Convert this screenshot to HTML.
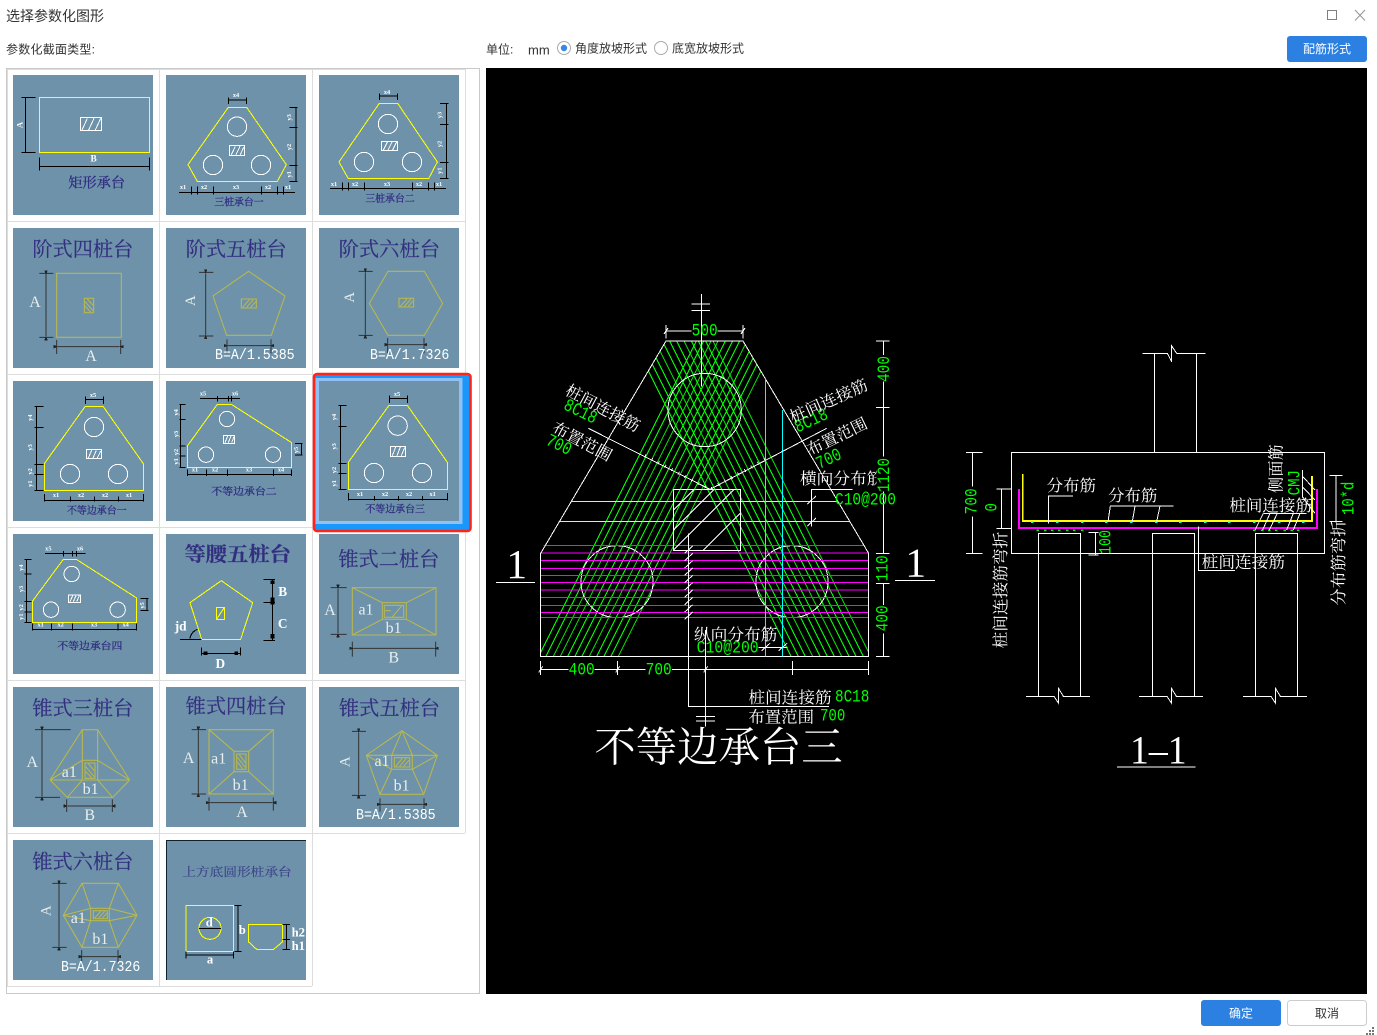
<!DOCTYPE html>
<html lang="zh"><head><meta charset="utf-8"><title>选择参数化图形</title>
<style>
html,body{margin:0;padding:0;background:#fff;width:1377px;height:1035px;overflow:hidden}
svg{display:block;position:absolute;left:0;top:0;shape-rendering:crispEdges}
circle.aa,rect.aa,path.aa{shape-rendering:geometricPrecision}
text{dominant-baseline:central}
.ui{font:12px "Liberation Sans","Noto Sans CJK SC",sans-serif;fill:#333}
.bg{fill:#6d92a9}
.y{fill:none;stroke:#ff0;stroke-width:3.2}
.o{fill:none;stroke:#b8b850;stroke-width:3.2;shape-rendering:geometricPrecision}
.b{fill:none;stroke:#000;stroke-width:3.2}
.d{fill:none;stroke:#333;stroke-width:3;shape-rendering:geometricPrecision}
.w{fill:none;stroke:#fff;stroke-width:3}
.s{font:bold 19px "Liberation Serif",serif;fill:#fff;text-anchor:middle}
.h{font-family:"Noto Serif CJK SC",serif;font-size:60px;fill:#332f80;stroke:#332f80;stroke-width:.6}
.h2{font-family:"Noto Serif CJK SC",serif;font-size:30px;fill:#2f2b80;stroke:#2f2b80;stroke-width:.8}
.L{font-family:"Liberation Serif",serif;font-size:48px;fill:#e8eeee;text-anchor:middle}
.K{font-family:"Liberation Mono",monospace;font-size:44px;fill:#fff}
.B{font:bold 36px "Liberation Serif",serif;fill:#fff;text-anchor:middle}
.g{font-family:"Liberation Mono",monospace;font-size:54px;fill:#0f0}
.a{font-family:"Noto Serif CJK SC",serif;font-size:48px;fill:#fff}
.gm{text-anchor:middle}
.n{fill:none;stroke:#fff;stroke-width:3}
</style></head><body>
<svg width="1377" height="1035" viewBox="0 0 1377 1035" xmlns="http://www.w3.org/2000/svg">
<defs>
<marker id="ar" viewBox="0 0 14 10" refX="1" refY="5" markerWidth="14" markerHeight="10" markerUnits="userSpaceOnUse" orient="auto-start-reverse"><path d="M0 5L14 0V10Z" fill="#222"/></marker>
<clipPath id="out"><path d="M528 153H759L1136 790V1099H152V790Z"/></clipPath>
<clipPath id="ctr"><rect x="551" y="598" width="200" height="183"/></clipPath>
</defs>

<!-- header -->
<text class="ui" x="6" y="16" style="font-size:14px" textLength="98">选择参数化图形</text>
<text class="ui" x="6" y="49.5" textLength="89">参数化截面类型:</text>
<text class="ui" x="486" y="49.5">单位:</text>
<text class="ui" x="528" y="50" style="font-size:13px">mm</text>
<circle class="aa" cx="564" cy="48" r="6.5" fill="#fff" stroke="#aaa"/><circle class="aa" cx="564" cy="48" r="3.2" fill="#3a86e8"/>
<text class="ui" x="575" y="48.5" textLength="72" fill="#222">角度放坡形式</text>
<circle class="aa" cx="661" cy="48" r="6.5" fill="#fff" stroke="#aaa"/>
<text class="ui" x="672" y="48.5" textLength="72">底宽放坡形式</text>
<rect x="1327.5" y="10.5" width="9" height="9" fill="none" stroke="#808080" stroke-width="1.1"/>
<path class="aa" d="M1355 10L1365 20.5M1365 10L1355 20.5" stroke="#999" stroke-width="1.1" fill="none"/>
<rect class="aa" x="1287" y="36" width="80" height="26" rx="3" fill="#2b80e2"/>
<text class="ui" x="1327" y="49" text-anchor="middle" style="fill:#fff">配筋形式</text>

<!-- footer -->
<rect class="aa" x="1201" y="1000" width="80" height="26" rx="3" fill="#2b80e2"/>
<text class="ui" x="1241" y="1013.5" text-anchor="middle" style="fill:#fff">确定</text>
<rect class="aa" x="1287.5" y="1000.5" width="79" height="25" rx="3" fill="#fff" stroke="#ccc"/>
<text class="ui" x="1327" y="1013.5" text-anchor="middle">取消</text>
<path d="M1372 1027h2v2h-2zM1369 1030h2v2h-2zM1372 1030h2v2h-2zM1366 1033h2v2h-2zM1369 1033h2v2h-2zM1372 1033h2v2h-2z" fill="#777"/>

<!-- list panel -->
<rect x="6.5" y="68.5" width="473" height="925" fill="#fff" stroke="#c9c9c9" stroke-width="1.2"/>
<path d="M7.5 69V986M159.5 69V986M312.5 69V986M465.5 69V833M7 69.5H465M7 221.5H465M7 374.5H465M7 527.5H465M7 680.5H465M7 833.5H465M7 986.5H312" stroke="#ddd" fill="none"/>

<!-- selection -->
<rect class="aa" x="314" y="374" width="156.5" height="157" rx="3" fill="#1a97fb" stroke="#ff2318" stroke-width="2.6"/>
<rect x="315.5" y="378" width="147" height="146" fill="#8fc0f6"/>

<!-- thumbs backgrounds -->
<rect class="bg" x="13" y="75" width="140" height="140"/><rect class="bg" x="166" y="75" width="140" height="140"/><rect class="bg" x="319" y="75" width="140" height="140"/>
<rect class="bg" x="13" y="228" width="140" height="140"/><rect class="bg" x="166" y="228" width="140" height="140"/><rect class="bg" x="319" y="228" width="140" height="140"/>
<rect class="bg" x="13" y="381" width="140" height="140"/><rect class="bg" x="166" y="381" width="140" height="140"/><rect class="bg" x="319" y="381" width="140" height="140"/>
<rect class="bg" x="13" y="534" width="140" height="140"/><rect class="bg" x="166" y="534" width="140" height="140"/><rect class="bg" x="319" y="534" width="140" height="140"/>
<rect class="bg" x="13" y="687" width="140" height="140"/><rect class="bg" x="166" y="687" width="140" height="140"/><rect class="bg" x="319" y="687" width="140" height="140"/>
<rect class="bg" x="13" y="840" width="140" height="140"/><rect class="bg" x="166" y="840" width="140" height="140"/>
<path d="M166 840.5H306M166.5 840V980" stroke="#10222e" fill="none"/>

<!-- ROW 1 & 2 -->
<g transform="scale(.33333)">
 <!-- rect -->
 <rect class="y" x="118" y="292" width="331" height="166"/>
 <rect class="w" x="241" y="353" width="64" height="39"/>
 <path class="w" d="M246 390L262 355M266 390L282 355M286 390L302 355"/>
 <path class="b" d="M64 292H107M64 458H107M77 292V458M118 472V512M449 472V512M118 499H449"/>
 <text class="s" style="font-size:26px" transform="rotate(-90 58 375)" x="58" y="375">A</text>
 <text class="s" style="font-size:28px" x="281" y="478">B</text>
 <text class="h2" style="font-size:42px" x="205" y="548" textLength="170" lengthAdjust="spacingAndGlyphs">矩形承台</text>
 <!-- 三桩一 -->
 <path class="y" d="M685 322H740L859 494L832 544H592L564 494Z"/>
 <circle class="w" cx="711" cy="380" r="29"/><circle class="w" cx="639" cy="495" r="29"/><circle class="w" cx="783" cy="495" r="29"/>
 <rect class="w" x="688" y="437" width="46" height="29"/><path class="w" d="M694 464L706 439M708 464L720 439M721 464L731 442"/>
 <path class="b" d="M686 300H740M686 293V312M740 293V312M888 322V544M868 322H893M868 383H893M868 496H893M868 544H893M537 578H885M575 560V584M592 560V584M640 560V584M785 560V584M832 560V584M850 560V584"/>
 <text class="s" x="708" y="287">x4</text>
 <text class="s" transform="rotate(-90 868 352)" x="868" y="352">y3</text><text class="s" transform="rotate(-90 868 441)" x="868" y="441">y2</text><text class="s" transform="rotate(-90 868 523)" x="868" y="523">y1</text>
 <text class="s" x="549" y="563">x1</text><text class="s" x="612" y="563">x2</text><text class="s" x="708" y="563">x3</text><text class="s" x="804" y="563">x2</text><text class="s" x="864" y="563">x1</text>
 <text class="h2" x="643" y="605" textLength="148" lengthAdjust="spacingAndGlyphs">三桩承台一</text>
 <!-- 三桩二 -->
 <path class="y" d="M1138 310H1193L1312 486L1286 536H1045L1017 486Z"/>
 <circle class="w" cx="1164" cy="372" r="29"/><circle class="w" cx="1092" cy="486" r="29"/><circle class="w" cx="1236" cy="486" r="29"/>
 <rect class="w" x="1144" y="424" width="49" height="28"/><path class="w" d="M1150 450L1162 426M1164 450L1176 426M1178 450L1190 426"/>
 <path class="b" d="M1138 288H1192M1138 281V300M1192 281V300M1340 310V536M1320 310H1345M1320 373H1345M1320 487H1345M1320 536H1345M990 566H1338M1027 548V572M1045 548V572M1093 548V572M1238 548V572M1286 548V572M1304 548V572"/>
 <text class="s" x="1161" y="278">x4</text>
 <text class="s" transform="rotate(-90 1320 345)" x="1320" y="345">y3</text><text class="s" transform="rotate(-90 1320 432)" x="1320" y="432">y2</text><text class="s" transform="rotate(-90 1320 512)" x="1320" y="512">y1</text>
 <text class="s" x="1002" y="554">x1</text><text class="s" x="1065" y="554">x2</text><text class="s" x="1161" y="554">x3</text><text class="s" x="1257" y="554">x2</text><text class="s" x="1317" y="554">x1</text>
 <text class="h2" x="1096" y="594" textLength="148" lengthAdjust="spacingAndGlyphs">三桩承台二</text>

 <!-- 阶式四 -->
 <text class="h" x="97" y="743" textLength="303" lengthAdjust="spacingAndGlyphs">阶式四桩台</text>
 <path class="o" d="M170 820H364V1012H170Z"/>
 <path class="o" d="M253 895H281V938H253Z"/><path class="o" stroke-width="2" d="M255 905L279 932M255 918L272 936M262 897L279 916"/>
 <path class="d" d="M118 820H160M118 1012H160" stroke="#444"/>
 <path class="d" marker-start="url(#ar)" marker-end="url(#ar)" d="M138 824V1008"/>
 <path class="d" d="M170 1020V1062M362 1020V1062"/>
 <path class="d" marker-start="url(#ar)" marker-end="url(#ar)" d="M174 1040H358"/>
 <text class="L" x="105" y="908">A</text><text class="L" x="273" y="1070">A</text>
 <!-- 阶式五 -->
 <text class="h" x="557" y="743" textLength="303" lengthAdjust="spacingAndGlyphs">阶式五桩台</text>
 <path class="o" d="M746 814L855 888L814 1006H680L639 888Z"/>
 <path class="o" d="M724 897H769V924H724Z"/><path class="o" stroke-width="2" d="M728 922L748 899M740 922L760 899M752 922L767 905"/>
 <path class="d" d="M597 817H640M597 1008H640"/>
 <path class="d" marker-start="url(#ar)" marker-end="url(#ar)" d="M617 821V1004"/>
 <path class="d" d="M681 1018V1060M813 1018V1060"/>
 <path class="d" marker-start="url(#ar)" marker-end="url(#ar)" d="M685 1037H809"/>
 <text class="L" style="font-size:44px" transform="rotate(-90 573 902)" x="573" y="902">A</text>
 <text class="K" x="645" y="1068" textLength="239" lengthAdjust="spacingAndGlyphs">B=A/1.5385</text>
 <!-- 阶式六 -->
 <text class="h" x="1016" y="743" textLength="304" lengthAdjust="spacingAndGlyphs">阶式六桩台</text>
 <path class="o" d="M1164 814H1273L1328 910L1273 1006H1164L1108 910Z"/>
 <path class="o" d="M1197 895H1241V921H1197Z"/><path class="o" stroke-width="2" d="M1201 919L1221 897M1213 919L1233 897M1225 919L1239 903"/>
 <path class="d" d="M1076 814H1118M1076 1006H1118"/>
 <path class="d" marker-start="url(#ar)" marker-end="url(#ar)" d="M1096 818V1002"/>
 <path class="d" d="M1163 1014V1060M1272 1014V1060"/>
 <path class="d" marker-start="url(#ar)" marker-end="url(#ar)" d="M1167 1034H1268"/>
 <text class="L" style="font-size:44px" transform="rotate(-90 1050 892)" x="1050" y="892">A</text>
 <text class="K" x="1110" y="1068" textLength="238" lengthAdjust="spacingAndGlyphs">B=A/1.7326</text>
</g>

<!-- ROW 3 & 4 -->
<g transform="translate(0,370) scale(.33333)">
 <!-- 不等边一 -->
 <path class="y" d="M255 110H310L430 281V361H133V281Z"/>
 <circle class="w" cx="282" cy="171" r="29"/><circle class="w" cx="210" cy="312" r="29"/><circle class="w" cx="354" cy="312" r="29"/>
 <rect class="w" x="259" y="239" width="46" height="27"/><path class="w" d="M265 264L275 241M279 264L289 241M292 264L302 243"/>
 <path class="b" d="M256 88H310M256 80V102M310 80V102M110 110V361M103 110H130M103 172H130M103 284H130M103 314H130M103 361H130M133 391H430M133 372V395M212 380V395M284 380V395M355 380V395M430 372V395"/>
 <text class="s" x="279" y="77">x5</text>
 <text class="s" transform="rotate(-90 91 143)" x="91" y="143">y4</text><text class="s" transform="rotate(-90 91 232)" x="91" y="232">y3</text><text class="s" transform="rotate(-90 91 304)" x="91" y="304">y2</text><text class="s" transform="rotate(-90 91 341)" x="91" y="341">y1</text>
 <text class="s" x="168" y="377">x1</text><text class="s" x="243" y="377">x2</text><text class="s" x="315" y="377">x2</text><text class="s" x="387" y="377">x1</text>
 <text class="h2" x="201" y="420" textLength="179" lengthAdjust="spacingAndGlyphs">不等边承台一</text>
 <!-- 不等边二 -->
 <path class="y" d="M652 103H694L875 218V292H562V228Z"/>
 <circle class="w" cx="681" cy="147" r="23"/><circle class="w" cx="618" cy="254" r="23"/><circle class="w" cx="819" cy="254" r="23"/>
 <rect class="w" x="670" y="196" width="34" height="24"/><path class="w" d="M675 218L683 198M685 218L693 198M695 218L702 200"/>
 <path class="b" d="M600 85H720M652 78V95M685 78V95M694 78V95M541 103V292M538 103H557M538 148H557M538 228H557M538 258H557M538 292H557M885 220H908M885 255H908M905 220V255M562 313H875M562 298V318M619 298V318M682 298V318M820 298V318M875 298V318"/>
 <text class="s" x="609" y="72">x5</text><text class="s" x="705" y="72">x6</text>
 <text class="s" transform="rotate(-90 530 127)" x="530" y="127">y4</text><text class="s" transform="rotate(-90 530 192)" x="530" y="192">y3</text><text class="s" transform="rotate(-90 530 246)" x="530" y="246">y2</text><text class="s" transform="rotate(-90 530 274)" x="530" y="274">y1</text><text class="s" transform="rotate(-90 890 240)" x="890" y="240">y5</text>
 <text class="s" x="585" y="300">x1</text><text class="s" x="645" y="300">x2</text><text class="s" x="747" y="300">x3</text><text class="s" x="843" y="300">x4</text>
 <text class="h2" x="634" y="363" textLength="196" lengthAdjust="spacingAndGlyphs">不等边承台二</text>
 <!-- 不等边三 -->
 <path class="y" d="M1167 106H1222L1342 277V358H1045V277Z"/>
 <circle class="w" cx="1193" cy="167" r="29"/><circle class="w" cx="1122" cy="309" r="29"/><circle class="w" cx="1266" cy="309" r="29"/>
 <rect class="w" x="1171" y="229" width="46" height="30"/><path class="w" d="M1177 257L1187 231M1191 257L1201 231M1204 257L1214 233"/>
 <path class="b" d="M1168 85H1222M1168 77V99M1222 77V99M1022 106V358M1015 106H1040M1015 169H1040M1015 281H1040M1015 311H1040M1015 358H1040M1045 388H1342M1045 369V392M1123 378V392M1195 378V392M1267 378V392M1342 369V392"/>
 <text class="s" x="1191" y="74">x5</text>
 <text class="s" transform="rotate(-90 1003 141)" x="1003" y="141">y4</text><text class="s" transform="rotate(-90 1003 229)" x="1003" y="229">y3</text><text class="s" transform="rotate(-90 1003 300)" x="1003" y="300">y2</text><text class="s" transform="rotate(-90 1003 340)" x="1003" y="340">y1</text>
 <text class="s" x="1080" y="374">x1</text><text class="s" x="1155" y="374">x2</text><text class="s" x="1227" y="374">x2</text><text class="s" x="1298" y="374">x1</text>
 <text class="h2" x="1096" y="416" textLength="179" lengthAdjust="spacingAndGlyphs">不等边承台三</text>

 <!-- 不等边四 -->
 <path class="y" d="M190 568H229L410 684V757H97V694Z"/>
 <circle class="w" cx="215" cy="612" r="23"/><circle class="w" cx="153" cy="719" r="23"/><circle class="w" cx="353" cy="719" r="23"/>
 <rect class="w" x="205" y="675" width="37" height="22"/><path class="w" d="M210 695L218 677M220 695L228 677M230 695L238 677"/>
 <path class="b" d="M135 550H257M190 543V560M218 543V560M229 543V560M79 568V757M74 568H95M74 612H95M74 694H95M74 726H95M74 757H95M422 686H445M422 721H445M441 686V721M97 778H410M97 760V782M154 760V782M217 760V782M354 760V782M410 760V782"/>
 <text class="s" x="145" y="537">x5</text><text class="s" x="240" y="537">x6</text>
 <text class="s" transform="rotate(-90 65 593)" x="65" y="593">y4</text><text class="s" transform="rotate(-90 65 657)" x="65" y="657">y3</text><text class="s" transform="rotate(-90 65 712)" x="65" y="712">y2</text><text class="s" transform="rotate(-90 65 740)" x="65" y="740">y1</text><text class="s" transform="rotate(-90 428 706)" x="428" y="706">y5</text>
 <text class="s" x="122" y="765">x1</text><text class="s" x="182" y="765">x2</text><text class="s" x="282" y="765">x3</text><text class="s" x="377" y="765">x4</text>
 <text class="h2" x="172" y="827" textLength="195" lengthAdjust="spacingAndGlyphs">不等边承台四</text>
 <!-- 等腰五 -->
 <text class="h" style="font-weight:700" x="553" y="548" textLength="320" lengthAdjust="spacingAndGlyphs">等腰五桩台</text>
 <path class="y" d="M664 632L758 698L722 808H605L570 698Z"/>
 <rect class="y" x="649" y="712" width="25" height="36"/><path class="y" d="M651 746L672 714"/>
 <path class="b" d="M817 629V811M790 629H825M790 698H825M790 811H825M540 808H605M605 833V857M722 833V857M605 850H722M570 805Q574 785 592 778"/>
 <path d="M811 632h12v10h-12zM811 683h12v20h-12zM811 792h12v14h-12zM611 845h11v10h-11zM703 845h11v10h-11z" fill="#000"/>
 <text class="B" style="font-size:40px" x="848" y="665">B</text><text class="B" style="font-size:40px" x="848" y="760">C</text><text class="B" style="font-size:40px" x="542" y="768">jd</text><text class="B" style="font-size:40px" x="661" y="880">D</text>
 <!-- 锥式二 -->
 <text class="h" x="1015" y="563" textLength="303" lengthAdjust="spacingAndGlyphs">锥式二桩台</text>
 <path class="o" d="M1057 653H1308V795H1057Z"/>
 <path class="o" d="M1147 698H1219V748H1147ZM1153 706H1211V742H1153Z"/>
 <path class="o" d="M1057 653L1147 698M1308 653L1219 698M1057 795L1147 748M1308 795L1219 748M1176 742L1205 708M1155 722H1172"/>
 <path class="d" d="M992 653H1040M992 793H1040"/>
 <path class="d" marker-start="url(#ar)" marker-end="url(#ar)" d="M1014 657V789"/>
 <path class="d" d="M1057 815V860M1307 815V860"/>
 <path class="d" marker-start="url(#ar)" marker-end="url(#ar)" d="M1061 835H1303"/>
 <text class="L" x="990" y="722">A</text><text class="L" x="1098" y="720">a1</text><text class="L" x="1181" y="775">b1</text><text class="L" x="1181" y="864">B</text>
</g>

<!-- ROW 5 & 6 -->
<g transform="translate(0,680) scale(.33333)">
 <!-- 锥式三 -->
 <text class="h" x="97" y="80" textLength="303" lengthAdjust="spacingAndGlyphs">锥式三桩台</text>
 <path class="o" d="M247 149H293V241H247ZM247 241H293V300H247ZM150 300H389M150 300L202 352H338L389 300M247 149L150 300M293 149L389 300M247 241L150 300M293 241L389 300M247 300L202 352M293 300L338 352"/>
 <path class="o" d="M255 249H285V295H255Z"/><path class="o" stroke-width="2" d="M257 260L283 290M257 275L275 293M265 251L283 272"/>
 <path class="d" d="M105 149H212M105 352H180"/>
 <path class="d" marker-start="url(#ar)" marker-end="url(#ar)" d="M126 153V348"/>
 <path class="d" d="M200 358V396M337 358V396"/>
 <path class="d" marker-start="url(#ar)" marker-end="url(#ar)" d="M204 378H333"/>
 <text class="L" x="97" y="248">A</text><text class="L" x="208" y="278">a1</text><text class="L" x="272" y="328">b1</text><text class="L" x="269" y="406">B</text>
 <!-- 锥式四 -->
 <text class="h" x="557" y="73" textLength="303" lengthAdjust="spacingAndGlyphs">锥式四桩台</text>
 <path class="o" d="M627 149H820V342H627Z"/>
 <path class="o" d="M702 214H746V275H702ZM710 222H738V268H710Z"/>
 <path class="o" stroke-width="2" d="M712 232L736 262M712 246L728 266M718 224L736 248"/>
 <path class="o" d="M627 149L702 214M820 149L746 214M627 342L702 275M820 342L746 275"/>
 <path class="d" d="M575 149H618M575 342H618"/>
 <path class="d" marker-start="url(#ar)" marker-end="url(#ar)" d="M595 153V338"/>
 <path class="d" d="M627 352V392M820 352V392"/>
 <path class="d" marker-start="url(#ar)" marker-end="url(#ar)" d="M631 368H816"/>
 <text class="L" x="566" y="235">A</text><text class="L" x="656" y="237">a1</text><text class="L" x="722" y="316">b1</text><text class="L" x="726" y="398">A</text>
 <!-- 锥式五 -->
 <text class="h" x="1017" y="80" textLength="303" lengthAdjust="spacingAndGlyphs">锥式五桩台</text>
 <path class="o" d="M1206 152L1312 226L1271 343H1140L1099 226ZM1099 226H1312M1206 152L1175 226M1206 152L1237 226M1175 268L1140 343M1237 268L1271 343M1099 226L1175 268M1312 226L1237 268"/>
 <path class="o" d="M1175 226H1237V268H1175ZM1183 233H1229V261H1183Z"/>
 <path class="o" stroke-width="2" d="M1187 259L1207 235M1199 259L1219 235M1211 259L1227 241"/>
 <path class="d" d="M1056 154H1098M1056 346H1098"/>
 <path class="d" marker-start="url(#ar)" marker-end="url(#ar)" d="M1076 158V342"/>
 <path class="d" d="M1140 355V395M1272 355V395"/>
 <path class="d" marker-start="url(#ar)" marker-end="url(#ar)" d="M1144 373H1268"/>
 <text class="L" style="font-size:44px" transform="rotate(-90 1036 245)" x="1036" y="245">A</text><text class="L" x="1146" y="245">a1</text><text class="L" x="1205" y="318">b1</text>
 <text class="K" x="1068" y="408" textLength="239" lengthAdjust="spacingAndGlyphs">B=A/1.5385</text>
 <!-- 锥式六 -->
 <text class="h" x="97" y="540" textLength="303" lengthAdjust="spacingAndGlyphs">锥式六桩台</text>
 <path class="o" d="M246 610H355L411 706L355 802H246L190 706ZM246 610L272 685M355 610L328 685M190 706L272 685M190 706L272 722M411 706L328 685M411 706L328 722M272 722L246 802M328 722L355 802"/>
 <path class="o" d="M272 685H328V722H272ZM280 692H322V716H280Z"/>
 <path class="o" stroke-width="2" d="M284 714L302 694M296 714L314 694M308 714L320 700"/>
 <path class="d" d="M157 610H200M157 802H200"/>
 <path class="d" marker-start="url(#ar)" marker-end="url(#ar)" d="M177 614V798"/>
 <path class="d" d="M245 810V852M354 810V852"/>
 <path class="d" marker-start="url(#ar)" marker-end="url(#ar)" d="M249 830H350"/>
 <text class="L" style="font-size:44px" transform="rotate(-90 140 692)" x="140" y="692">A</text><text class="L" x="235" y="716">a1</text><text class="L" x="301" y="778">b1</text>
 <text class="K" x="183" y="864" textLength="238" lengthAdjust="spacingAndGlyphs">B=A/1.7326</text>
 <!-- 上方底圆 -->
 <text class="h2" style="font-size:36px;fill-opacity:.75;stroke-width:.3" x="547" y="574" textLength="328" lengthAdjust="spacingAndGlyphs">上方底圆形桩承台</text>
 <rect class="y" x="558" y="676" width="143" height="138"/>
 <circle class="y" cx="630" cy="745" r="33"/>
 <path class="y" d="M745 734H848V785L821 808H770L745 785Z"/>
 <path class="b" d="M597 745H663"/>
 <path class="b" stroke-width="4" d="M714 676V814M703 676H725M703 814H725M558 825H701M558 814V836M701 814V836M860 734V808M848 734H870M848 778H870M848 808H870"/>
 <text class="B" style="font-size:38px" x="628" y="727">d</text><text class="B" style="font-size:38px" x="727" y="750">b</text><text class="B" style="font-size:38px" x="630" y="838">a</text><text class="B" style="font-size:38px" x="895" y="757">h2</text><text class="B" style="font-size:38px" x="895" y="798">h1</text>
</g>

<!-- CAD canvas -->
<rect x="486" y="68" width="881" height="926" fill="#000"/>

<g transform="translate(490,290) scale(.33333)">
 <!-- green hatch -->
 <g clip-path="url(#out)">
  <path fill="none" stroke="#0f0" stroke-width="3" d="M430 153L903 1099M452 153L925 1099M473 153L946 1099M495 153L968 1099M517 153L990 1099M539 153L1012 1099M560 153L1033 1099M582 153L1055 1099M604 153L1077 1099M625 153L1098 1099M647 153L1120 1099M669 153L1142 1099M858 153L385 1099M836 153L363 1099M815 153L342 1099M793 153L320 1099M771 153L298 1099M749 153L276 1099M728 153L255 1099M706 153L233 1099M684 153L211 1099M663 153L190 1099M641 153L168 1099M619 153L146 1099"/>
 </g>
 <!-- circles -->
 <circle class="n" cx="644" cy="360" r="110"/><circle class="n" cx="381" cy="875" r="108"/><circle class="n" cx="906" cy="875" r="108"/>
 <!-- magenta -->
 <path fill="none" stroke="#f0f" stroke-width="3" d="M160 766H1125M152 789H1136M152 811H1136M152 835H1136M152 856H1136M152 877H1136M152 900H1136M152 922H1136M152 946H1136M152 967H1136M152 982H1136"/>
 <!-- yellow -->
 <path fill="none" stroke="#ff0" stroke-width="3" d="M243 634H1045M208 694H1080"/>
 <!-- outline -->
 <path class="n" d="M528 153H759L1136 790V1099H152V790Z"/>
 <!-- cyan -->
 <path fill="none" stroke="#0ff" stroke-width="3" d="M827 270V1099M878 360V1099"/>
 <!-- center -->
 <path class="n" d="M634 12V290M604 42H660M604 62H660M528 123H605M683 123H759M528 105V145M759 105V145M522 132L534 114M753 132L765 114"/>
 <path class="n" d="M295 415L660 598L1010 415"/>
 <path fill="none" stroke="#fff" stroke-width="10" stroke-dasharray="2.5 20" d="M465 497L660 598L835 503"/>
 <rect class="n" x="551" y="598" width="200" height="183"/>
 <g clip-path="url(#ctr)"><path class="n" d="M551 660L615 596M551 720L675 596M551 780L735 596M640 781L760 661"/></g>
 <!-- vertical leaders -->
 <path class="n" d="M596 730V1249H1017M647 1020V1310M618 1280H675M618 1293H675"/>
 <path class="n" d="M584 790L608 768M584 812L608 790M584 834L608 812M584 856L608 834M584 878L608 856M584 900L608 878M584 922L608 900M584 944L608 922M584 966L608 944M584 988L608 966"/>
 <!-- dims -->
 <path class="n" d="M152 1138H235M314 1138H467M546 1138H1136M152 1113V1155M383 1113V1155M647 1113V1155M908 1113V1155M1136 1113V1155M146 1147L158 1129M377 1147L389 1129M641 1147L653 1129"/>
 <path class="n" d="M1180 153V195M1180 275V500M1180 605V790M1180 880V945M1180 1030V1099M1158 153H1198M1158 352H1198M1158 790H1198M1158 880H1198M1158 1099H1198"/>
 <!-- section marks -->
 <path class="n" d="M18 877H135M1215 871H1335"/>
 <text x="80" y="825" font-family="Liberation Serif,serif" font-size="125" fill="#fff" text-anchor="middle">1</text>
 <text x="1277" y="820" font-family="Liberation Serif,serif" font-size="125" fill="#fff" text-anchor="middle">1</text>
 <!-- green text -->
 <text class="g" x="605" y="125" textLength="78" lengthAdjust="spacingAndGlyphs">500</text>
 <text class="g gm" transform="rotate(-90 1185 237)" x="1185" y="237" textLength="78" lengthAdjust="spacingAndGlyphs">400</text>
 <text class="g gm" transform="rotate(-90 1180 835)" x="1180" y="835" textLength="78" lengthAdjust="spacingAndGlyphs">110</text>
 <text class="g gm" transform="rotate(-90 1180 985)" x="1180" y="985" textLength="78" lengthAdjust="spacingAndGlyphs">400</text>
 <text class="g" x="236" y="1141" textLength="78" lengthAdjust="spacingAndGlyphs">400</text>
 <text class="g" x="467" y="1141" textLength="78" lengthAdjust="spacingAndGlyphs">700</text>
 <text class="g" x="1035" y="632" textLength="183" lengthAdjust="spacingAndGlyphs">C10@200</text>
 <text class="g" x="620" y="1075" textLength="186" lengthAdjust="spacingAndGlyphs">C10@200</text>
 <text class="g" x="1035" y="1222" textLength="103" lengthAdjust="spacingAndGlyphs">8C18</text>
 <text class="g" x="990" y="1280" textLength="76" lengthAdjust="spacingAndGlyphs">700</text>
 <text class="g gm" transform="rotate(26 270 368)" x="270" y="368" textLength="104" lengthAdjust="spacingAndGlyphs">8C18</text>
 <text class="g gm" transform="rotate(26 205 468)" x="205" y="468" textLength="78" lengthAdjust="spacingAndGlyphs">700</text>
 <text class="g gm" transform="rotate(-25 965 395)" x="965" y="395" textLength="104" lengthAdjust="spacingAndGlyphs">8C18</text>
 <text class="g gm" transform="rotate(-25 1018 510)" x="1018" y="510" textLength="78" lengthAdjust="spacingAndGlyphs">700</text>
 <!-- white cjk -->
 <text class="a gm" transform="rotate(28 340 352)" x="340" y="352" textLength="245" lengthAdjust="spacingAndGlyphs">桩间连接筋</text>
 <text class="a gm" transform="rotate(28 278 452)" x="278" y="452" textLength="195" lengthAdjust="spacingAndGlyphs">布置范围</text>
 <text class="a gm" transform="rotate(-24 1015 330)" x="1015" y="330" textLength="250" lengthAdjust="spacingAndGlyphs">桩间连接筋</text>
 <text class="a gm" transform="rotate(-26 1040 437)" x="1040" y="437" textLength="195" lengthAdjust="spacingAndGlyphs">布置范围</text>
 <text class="a" x="930" y="562" textLength="250" lengthAdjust="spacingAndGlyphs">横向分布筋</text>
 <rect x="1160" y="530" width="19" height="60" fill="#000"/>
 <text class="g gm" transform="rotate(-90 1185 555)" x="1185" y="555" textLength="102" lengthAdjust="spacingAndGlyphs">1120</text>
 <path class="n" d="M1088 598H965V710M952 642L978 618M952 708L978 684"/>
 <text class="a" x="612" y="1030" textLength="250" lengthAdjust="spacingAndGlyphs">纵向分布筋</text>
 <path class="n" d="M806 1072H893M815 1082L840 1060M866 1082L891 1060"/>
 <text class="a" x="775" y="1220" textLength="250" lengthAdjust="spacingAndGlyphs">桩间连接筋</text>
 <text class="a" x="775" y="1278" textLength="197" lengthAdjust="spacingAndGlyphs">布置范围</text>
 <text class="a" style="font-size:124px" x="313" y="1360" textLength="745" lengthAdjust="spacingAndGlyphs">不等边承台三</text>
</g>

<g transform="translate(950,340) scale(.33333)">
 <path class="n" d="M613 40V337M739 40V337M577 40H652L665 65V18L680 40H767"/>
 <rect class="n" x="184" y="337" width="940" height="303"/>
 <path fill="none" stroke="#f0f" stroke-width="5" d="M207 447V564H1101V447"/>
 <path fill="none" stroke="#ff0" stroke-width="5" d="M218 402V543H1086V408"/>
 <path fill="none" stroke="#0ff" stroke-width="4" d="M243 547h8M318 547h8M393 547h8M465 547h8M540 547h8M615 547h8M687 547h8M762 547h8M834 547h8M909 547h8M984 547h8M1056 547h8"/>
 <path fill="none" stroke="#0f0" stroke-width="4" d="M259 571h8M282 571h8M303 571h8M324 571h8M348 571h8M369 571h8M393 571h8M909 571h8M933 571h8M954 571h8M975 571h8M1000 571h8M1021 571h8M1041 571h8"/>
 <path class="n" d="M265 1069V580H391V1069M607 1069V580H733V1069M916 1069V580H1042V1069"/>
 <path class="n" d="M228 1069H312L326 1090V1046L340 1069H420M567 1069H651L665 1090V1046L679 1069H759M879 1069H963L977 1090V1046L991 1069H1071"/>
 <!-- dims -->
 <path class="n" d="M68 337V440M68 530V640M48 337H98M48 640H98M155 447V565M140 447H184M140 565H184M1158 407V545M1138 407H1178M1138 545H1178M437 577V645M415 577H445M415 645H445"/>
 <path class="n" d="M369 468H295V550M671 498H481L474 545M555 498L547 545M630 498L620 545M940 520H1070M940 520L915 570M960 520L938 570M982 520L958 570M1030 520L1010 570M1050 520L1030 570M1057 390V470M1057 408L1095 450M1057 440L1095 480M1057 470L1095 520M745 560V691H855"/>
 <!-- green -->
 <text class="g gm" transform="rotate(-90 68 484)" x="68" y="484" textLength="78" lengthAdjust="spacingAndGlyphs">700</text>
 <text class="g gm" transform="rotate(-90 127 502)" x="127" y="502" textLength="26" lengthAdjust="spacingAndGlyphs">0</text>
 <text class="g gm" transform="rotate(-90 470 606)" x="470" y="606" textLength="72" lengthAdjust="spacingAndGlyphs">100</text>
 <text class="g gm" transform="rotate(-90 1198 475)" x="1198" y="475" textLength="100" lengthAdjust="spacingAndGlyphs">10*d</text>
 <text class="g gm" transform="rotate(-90 1036 428)" x="1036" y="428" textLength="76" lengthAdjust="spacingAndGlyphs">CMJ</text>
 <!-- white -->
 <text class="a" x="290" y="433" textLength="148" lengthAdjust="spacingAndGlyphs">分布筋</text>
 <text class="a" x="474" y="463" textLength="148" lengthAdjust="spacingAndGlyphs">分布筋</text>
 <text class="a" x="838" y="493" textLength="248" lengthAdjust="spacingAndGlyphs">桩间连接筋</text>
 <text class="a" x="755" y="663" textLength="250" lengthAdjust="spacingAndGlyphs">桩间连接筋</text>
 <text class="a gm" transform="rotate(-90 975 386)" x="975" y="386" textLength="146" lengthAdjust="spacingAndGlyphs">侧面筋</text>
 <text class="a gm" transform="rotate(-90 148 750)" x="148" y="750" textLength="350" lengthAdjust="spacingAndGlyphs">桩间连接筋弯折</text>
 <text class="a gm" transform="rotate(-90 1162 668)" x="1162" y="668" textLength="258" lengthAdjust="spacingAndGlyphs">分布筋弯折</text>
 <text x="625" y="1230" font-family="Liberation Serif,serif" font-size="120" fill="#fff" text-anchor="middle" textLength="170" lengthAdjust="spacingAndGlyphs">1–1</text>
 <path class="n" d="M501 1281H737"/>
</g>
</svg>
</body></html>
